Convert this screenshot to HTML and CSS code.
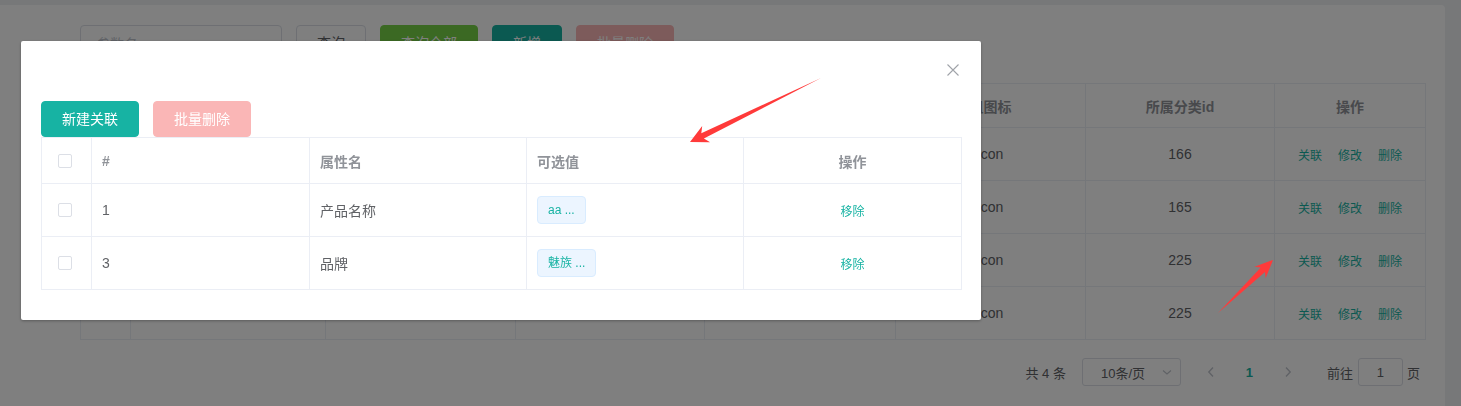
FILE: index.html
```html
<!DOCTYPE html>
<html lang="zh-CN">
<head>
<meta charset="utf-8">
<title>属性分组</title>
<link rel="stylesheet" href="styles.css">
</head>
<body>
<div class="card">
  <div class="toolbar">
    <div class="input"><span class="placeholder">参数名</span></div>
    <button class="btn btn-default">查询</button>
    <button class="btn btn-success">查询全部</button>
    <button class="btn btn-primary">新增</button>
    <button class="btn btn-danger-disabled">批量删除</button>
  </div>

  <div class="bg-table">
    <div class="bg-row bg-head">
      <div class="bg-cell center"><span class="checkbox"></span></div>
      <div class="bg-cell center">分组id</div>
      <div class="bg-cell center"></div>
      <div class="bg-cell center">排序</div>
      <div class="bg-cell center">描述</div>
      <div class="bg-cell center">组图标</div>
      <div class="bg-cell center">所属分类id</div>
      <div class="bg-cell center">操作</div>
    </div>
    <div class="bg-row">
      <div class="bg-cell center"><span class="checkbox"></span></div>
      <div class="bg-cell center">1</div>
      <div class="bg-cell center">主体</div>
      <div class="bg-cell center">0</div>
      <div class="bg-cell center">主体</div>
      <div class="bg-cell center">icon</div>
      <div class="bg-cell center">166</div>
      <div class="bg-cell center ops"><span>关联</span><span>修改</span><span>删除</span></div>
    </div>
    <div class="bg-row">
      <div class="bg-cell center"><span class="checkbox"></span></div>
      <div class="bg-cell center">2</div>
      <div class="bg-cell center">基本信息</div>
      <div class="bg-cell center">0</div>
      <div class="bg-cell center">基本信息</div>
      <div class="bg-cell center">icon</div>
      <div class="bg-cell center">165</div>
      <div class="bg-cell center ops"><span>关联</span><span>修改</span><span>删除</span></div>
    </div>
    <div class="bg-row">
      <div class="bg-cell center"><span class="checkbox"></span></div>
      <div class="bg-cell center">3</div>
      <div class="bg-cell center">主芯片</div>
      <div class="bg-cell center">0</div>
      <div class="bg-cell center">主芯片</div>
      <div class="bg-cell center">icon</div>
      <div class="bg-cell center">225</div>
      <div class="bg-cell center ops"><span>关联</span><span>修改</span><span>删除</span></div>
    </div>
    <div class="bg-row">
      <div class="bg-cell center"></div>
      <div class="bg-cell center"></div>
      <div class="bg-cell center"></div>
      <div class="bg-cell center"></div>
      <div class="bg-cell center"></div>
      <div class="bg-cell center">icon</div>
      <div class="bg-cell center">225</div>
      <div class="bg-cell center ops"><span>关联</span><span>修改</span><span>删除</span></div>
    </div>
  </div>

  <div class="pagination">
    <span class="total">共 4 条</span>
    <div class="sizes">
      <span>10条/页</span>
      <svg class="sel-arrow" width="10" height="10" viewBox="0 0 10 10"><path d="M1 3.5 L5 7 L9 3.5" fill="none" stroke="#c0c4cc" stroke-width="1.2"/></svg>
    </div>
    <span class="pg-btn"><svg width="10" height="12" viewBox="0 0 10 12"><path d="M7 1.5 L2.8 6 L7 10.5" fill="none" stroke="#c0c4cc" stroke-width="1.4"/></svg></span>
    <span class="pager">1</span>
    <span class="pg-btn"><svg width="10" height="12" viewBox="0 0 10 12"><path d="M3 1.5 L7.2 6 L3 10.5" fill="none" stroke="#c0c4cc" stroke-width="1.4"/></svg></span>
    <span class="jump">前往</span>
    <div class="jump-input">1</div>
    <span class="jump-end">页</span>
  </div>
</div>

<div class="mask"></div>

<div class="dialog-wrap">
  <div class="dialog">
    <span class="close">
      <svg width="14" height="14" viewBox="0 0 14 14"><path d="M1.5 1.5 L12.5 12.5 M12.5 1.5 L1.5 12.5" stroke="#a0a3a9" stroke-width="1.1"/></svg>
    </span>
    <div class="dlg-actions">
      <button class="btn btn-primary">新建关联</button>
      <button class="btn btn-danger-disabled">批量删除</button>
    </div>
    <div class="dlg-table">
      <div class="dlg-row dlg-head">
        <div class="dlg-cell check-cell"><span class="checkbox"></span></div>
        <div class="dlg-cell">#</div>
        <div class="dlg-cell">属性名</div>
        <div class="dlg-cell">可选值</div>
        <div class="dlg-cell center">操作</div>
      </div>
      <div class="dlg-row">
        <div class="dlg-cell check-cell"><span class="checkbox"></span></div>
        <div class="dlg-cell">1</div>
        <div class="dlg-cell">产品名称</div>
        <div class="dlg-cell"><span class="tag">aa ...</span></div>
        <div class="dlg-cell center"><span class="link">移除</span></div>
      </div>
      <div class="dlg-row">
        <div class="dlg-cell check-cell"><span class="checkbox"></span></div>
        <div class="dlg-cell">3</div>
        <div class="dlg-cell">品牌</div>
        <div class="dlg-cell"><span class="tag">魅族 ...</span></div>
        <div class="dlg-cell center"><span class="link">移除</span></div>
      </div>
    </div>
  </div>
</div>

<svg class="annotations" width="1461" height="406" viewBox="0 0 1461 406">
  <polygon fill="#ff3a3a" points="821,78 703.9,138.6 710.1,142.2 690,142 702.2,126.0 701.3,133.2"/>
  <polygon fill="#ff3a3a" points="1218,313 1260.8,267.5 1254.5,266.7 1273,260 1265.6,278.3 1265.0,271.9"/>
</svg>
</body>
</html>
```

FILE: styles.css
```css
* {
  box-sizing: border-box;
}

html, body {
  margin: 0;
  padding: 0;
  width: 1461px;
  height: 406px;
  overflow: hidden;
}

body {
  background: #eef0f3;
  font-family: "Liberation Sans", "Noto Sans CJK SC", sans-serif;
  font-size: 14px;
  color: #606266;
}

.card {
  margin: 5px 16px 0 0;
  height: 401px;
  background: #ffffff;
  border-radius: 0 4px 0 0;
  padding: 20px 20px 0 80px;
}

.toolbar {
  display: flex;
  align-items: center;
  gap: 14px;
}

.input {
  width: 202px;
  height: 36px;
  border: 1px solid #dcdfe6;
  border-radius: 4px;
  padding: 0 15px;
  display: flex;
  align-items: center;
}

.placeholder {
  color: #c0c4cc;
}

.btn {
  height: 36px;
  padding: 0 20px;
  border-radius: 4px;
  border: 1px solid #dcdfe6;
  font-family: inherit;
  font-size: 14px;
  line-height: 1;
  white-space: nowrap;
}

.btn-default {
  background: #fff;
  color: #606266;
}

.btn-success {
  background: #76d246;
  border-color: #76d246;
  color: #fff;
}

.btn-primary {
  background: #17b3a3;
  border-color: #17b3a3;
  color: #fff;
}

.btn-danger-disabled {
  background: #fab6b6;
  border-color: #fab6b6;
  color: #fff;
}

/* background table */
.bg-table {
  margin-top: 22px;
  width: 1346px;
  border-top: 1px solid #ebeef5;
  border-left: 1px solid #ebeef5;
}

.bg-row {
  display: grid;
  grid-template-columns: 50px 195px 190px 189px 191px 190px 189px 151px;
  height: 53px;
}

.bg-head {
  height: 44px;
  font-weight: bold;
  color: #909399;
}

.bg-cell {
  border-right: 1px solid #ebeef5;
  border-bottom: 1px solid #ebeef5;
  display: flex;
  align-items: center;
  padding: 0 10px;
  white-space: nowrap;
  overflow: hidden;
}

.center {
  justify-content: center;
}

.ops {
  gap: 16px;
  font-size: 12px;
  color: #17b3a3;
}

.checkbox {
  display: inline-block;
  width: 14px;
  height: 14px;
  border: 1px solid #dcdfe6;
  border-radius: 2px;
  background: #fff;
}

/* pagination */
.pagination {
  margin-top: 18px;
  width: 1345px;
  display: flex;
  justify-content: flex-end;
  align-items: center;
  height: 28px;
  padding-right: 5px;
  font-size: 13px;
  color: #606266;
}

.total {
  margin-right: 16px;
}

.sizes {
  width: 99px;
  height: 28px;
  border: 1px solid #dcdfe6;
  border-radius: 3px;
  display: flex;
  align-items: center;
  justify-content: space-between;
  padding: 0 8px 0 18px;
  margin-right: 15px;
}

.sel-arrow {
  display: block;
}

.pg-btn {
  width: 30px;
  height: 28px;
  display: flex;
  align-items: center;
  justify-content: center;
}

.pager {
  width: 47px;
  text-align: center;
  font-weight: bold;
  color: #17b3a3;
}

.jump {
  margin-left: 24px;
}

.jump-input {
  width: 45px;
  height: 28px;
  border: 1px solid #dcdfe6;
  border-radius: 3px;
  margin: 0 4px 0 5px;
  display: flex;
  align-items: center;
  justify-content: center;
}

/* mask & dialog */
.mask {
  position: fixed;
  inset: 0;
  background: rgba(0, 0, 0, 0.5);
}

.dialog-wrap {
  position: fixed;
  inset: 0;
}

.dialog {
  position: relative;
  margin: 41px 0 0 21px;
  width: 960px;
  background: #fff;
  border-radius: 2px;
  box-shadow: 0 1px 3px rgba(0, 0, 0, 0.3);
  padding: 60px 20px 30px;
}

.close {
  position: absolute;
  top: 22px;
  right: 21px;
  width: 14px;
  height: 14px;
  display: block;
}

.close svg {
  display: block;
}

.dlg-actions {
  display: flex;
  gap: 14px;
}

.dlg-table {
  width: 921px;
  border-top: 1px solid #ebeef5;
  border-left: 1px solid #ebeef5;
}

.dlg-row {
  display: grid;
  grid-template-columns: 50px 218px 217px 217px 218px;
  height: 53px;
}

.dlg-head {
  height: 46px;
  font-weight: bold;
  color: #909399;
}

.dlg-cell {
  border-right: 1px solid #ebeef5;
  border-bottom: 1px solid #ebeef5;
  display: flex;
  align-items: center;
  padding: 0 10px;
  white-space: nowrap;
}

.check-cell {
  justify-content: center;
  padding: 0 14px 0 10px;
}

.tag {
  display: inline-block;
  height: 28px;
  line-height: 26px;
  padding: 0 10px;
  font-size: 12px;
  color: #17b3a3;
  background: #ecf5ff;
  border: 1px solid #d9ecff;
  border-radius: 4px;
}

.link {
  font-size: 12px;
  color: #17b3a3;
}

.annotations {
  position: fixed;
  left: 0;
  top: 0;
  pointer-events: none;
}
```
